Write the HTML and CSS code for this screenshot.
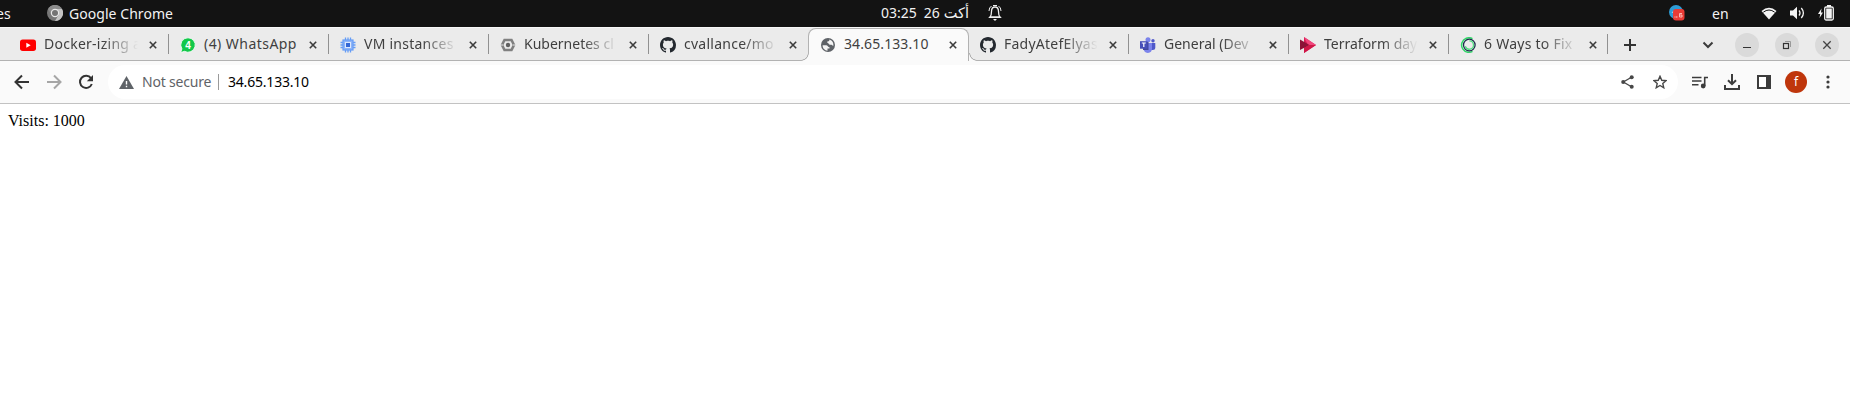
FILE: index.html
```html
<!DOCTYPE html>
<html lang="en">
<head>
<meta charset="utf-8">
<title>34.65.133.10</title>
<link rel="stylesheet" href="styles.css">
</head>
<body>
<svg width="0" height="0" class="defs">
  <symbol id="x" viewBox="0 0 8 8"><path d="M.8.8l6.4 6.4M7.2.8L.8 7.2" stroke="#3c3c3c" stroke-width="1.6"/></symbol>
  <symbol id="github" viewBox="0 0 16 16"><path fill="#24292f" d="M8 0C3.58 0 0 3.58 0 8c0 3.54 2.29 6.53 5.47 7.59.4.07.55-.17.55-.38 0-.19-.01-.82-.01-1.49-2.01.37-2.53-.49-2.69-.94-.09-.23-.48-.94-.82-1.13-.28-.15-.68-.52-.01-.53.63-.01 1.08.58 1.23.82.72 1.21 1.87.87 2.33.66.07-.52.28-.87.51-1.07-1.78-.2-3.64-.89-3.64-3.95 0-.87.31-1.59.82-2.15-.08-.2-.36-1.02.08-2.12 0 0 .67-.21 2.2.82.64-.18 1.32-.27 2-.27s1.36.09 2 .27c1.53-1.04 2.2-.82 2.2-.82.44 1.1.16 1.92.08 2.12.51.56.82 1.27.82 2.15 0 3.07-1.87 3.75-3.65 3.95.29.25.54.73.54 1.48 0 1.07-.01 1.93-.01 2.2 0 .21.15.46.55.38A8.01 8.01 0 0016 8c0-4.42-3.58-8-8-8z"/></symbol>
</svg>

<header class="system">
  <span class="activities">es</span>
  <svg class="chrome" width="16" height="16" viewBox="0 0 16 16"><circle cx="8" cy="8" r="8" fill="#777"/><path d="M8 4h7a8 8 0 01-7 12l3.500-6z" fill="#c4c4c4"/><path d="M1 4a8 8 0 0114 0H8L4.500 10z" fill="#8b8b8b"/><circle cx="8" cy="8" r="4.200" fill="#e8e8e8"/><circle cx="8" cy="8" r="3" fill="#747474"/></svg>
  <span class="appname">Google Chrome</span>
  <span class="clock"><span>03:25</span><span>26</span><span class="month" lang="ar">أكت</span></span>
  <svg class="bell" width="14" height="18" viewBox="0 0 14 18" fill="none" stroke="#eee"><path d="M2 13c1.500-1.500 1.500-3 1.500-5.500C3.500 4.500 5 3 7 3s3.500 1.500 3.500 4.500c0 2.500 0 4 1.500 5.500z" stroke-width="1.300"/><path d="M1 7q0-3.500 2.500-5M13 7q0-3.500-2.500-5M5 1.500h4M.8 13.500h12.400"/><path d="M5 15h4l-2 2z" fill="#eee" stroke="none"/></svg>
  <svg class="tray" width="16" height="16" viewBox="0 0 16 16"><circle cx="7" cy="7" r="7" fill="#2d9bd5"/><path d="M2.500 7.500l3-2v2z" fill="#fff"/><rect x="4" y="4" width="11.500" height="11.500" rx="3" fill="#e93b35"/><path d="M5.500 12h3.500" stroke="#ffc4bf" stroke-dasharray="1 .5"/><path d="M13 8.500h-2.500V12H13v-2h-2.500" fill="none" stroke="#ffc4bf" stroke-width=".9"/></svg>
  <span class="lang">en</span>
  <svg class="wifi" width="16" height="13" viewBox="0 0 16 13"><path d="M.5 4Q8-2.500 15.500 4L8 12.500z" fill="#f4f4f4"/><path d="M2.300 5.200Q8 .8 13.700 5.200" fill="none" stroke="#131313" stroke-width="1"/></svg>
  <svg class="sound" width="15" height="14" viewBox="0 0 15 14"><path d="M0 4.500h3L7 .8v12.400l-4-3.700H0z" fill="#f4f4f4"/><path d="M9 4.500q2 2.500 0 5M11.300 2q4.200 5 0 10" fill="none" stroke="#f4f4f4" stroke-width="1.300"/></svg>
  <svg class="battery" width="16" height="16" viewBox="0 0 16 16"><path d="M3.500 3.500L0 9h2.200L1.500 13 5 7.500H3z" fill="#f4f4f4"/><rect x="6.700" y="2" width="8.600" height="13" rx="1.500" fill="none" stroke="#f4f4f4" stroke-width="1.300"/><path d="M9 0h4v2H9zM8.200 3.500h5.600v10H8.200z" fill="#f4f4f4"/></svg>
</header>

<nav class="tabs">
  <div class="tab"><svg class="fav" viewBox="0 0 16 16"><rect y="2.500" width="16" height="11.500" rx="2.700" fill="#f00"/><path d="M6.300 5.700l4.400 2.500-4.400 2.500z" fill="#fff"/></svg><span class="title fade wide">Docker-izing a</span><svg class="close"><use href="#x"/></svg></div>
  <div class="tab"><svg class="fav" viewBox="0 0 16 16"><path d="M8 .8a7.200 7.200 0 11-3.500 13.500L.8 15.500l1.100-3.700A7.200 7.200 0 018 .8z" fill="#12c84a" stroke="#fff" stroke-width=".8"/><text x="5.300" y="11.700" class="badge4">4</text></svg><span class="title wider">(4) WhatsApp</span><svg class="close"><use href="#x"/></svg></div>
  <div class="tab"><svg class="fav" viewBox="0 0 16 16"><path d="M5.500.5v15M8 .5v15M10.500.5v15M.5 5.500h15M.5 8h15M.5 10.500h15" stroke="#669df6" stroke-width="1.300"/><rect x="3" y="3" width="10" height="10" fill="#8fb4f7" stroke="#669df6" stroke-width="1.200"/><rect x="5" y="5" width="6" height="6" fill="#dce8fc"/><rect x="6" y="6" width="4" height="4" fill="#3367d6"/></svg><span class="title fade wide">VM instances</span><svg class="close"><use href="#x"/></svg></div>
  <div class="tab"><svg class="fav" viewBox="0 0 16 16"><path d="M4.500 3h7L14 8l-2.500 5h-7L2 8z" fill="none" stroke="#808080" stroke-width="2.600"/><path d="M0 8h3M13 8h3" stroke="#ebebeb" stroke-width="1"/><circle cx="8" cy="8" r="2.200" fill="#606060"/></svg><span class="title fade">Kubernetes cl</span><svg class="close"><use href="#x"/></svg></div>
  <div class="tab before"><svg class="fav"><use href="#github"/></svg><span class="title fade wide">cvallance/mo</span><svg class="close"><use href="#x"/></svg></div>
  <div class="tab active"><svg class="fav" viewBox="0 0 16 16"><circle cx="8" cy="8" r="7" fill="#5f6368"/><path d="M2.600 8.200h3.500c1.700 0 1.800 2 3.400 2v1.300H7.500v2.200C4.600 13.300 2.500 11.200 2.600 8.200zM9.300 2.600c3 .8 4.500 3.500 4 6.400-1.200-.8-1.200-1.500-3.200-1.300-1.400 0-1.400-2-3-2.200 0-1 .5-1.300 1.600-1.300.7 0 .6-.8.6-1.600z" fill="#f5f5f5"/></svg><span class="title ip">34.65.133.10</span><svg class="close"><use href="#x"/></svg></div>
  <div class="tab after"><svg class="fav"><use href="#github"/></svg><span class="title fade wide">FadyAtefElyas</span><svg class="close"><use href="#x"/></svg></div>
  <div class="tab"><svg class="fav" viewBox="0 0 16 16"><circle cx="8" cy="2.800" r="2.500" fill="#7b83eb"/><circle cx="13" cy="3.700" r="1.700" fill="#5059c9"/><path d="M10 6h5.300v4.500q0 2.500-2.600 2.500H10z" fill="#5059c9"/><path d="M3.500 6H12v5.500q0 4-4.200 4.500-4.300-.5-4.300-5z" fill="#7b83eb"/><rect x="3" y="5" width="5.500" height="8" fill="#414699"/><rect y="4.200" width="7.500" height="7.500" fill="#464eb8"/><path d="M1.800 6h4M3.800 6v4" stroke="#fff" stroke-width="1.200"/></svg><span class="title fade">General (Dev</span><svg class="close"><use href="#x"/></svg></div>
  <div class="tab"><svg class="fav" viewBox="0 0 16 16"><path d="M4 0l12 8-12 8z" fill="#d81b55"/><path d="M4 0l12 8H8z" fill="#f0477d"/><path d="M0 2.500L9.500 8 0 13z" fill="#8c1237"/><path d="M4 11l5-3 7 0-12 8z" fill="#cf1747"/></svg><span class="title fade">Terraform day</span><svg class="close"><use href="#x"/></svg></div>
  <div class="tab last"><svg class="fav" viewBox="0 0 16 16"><path d="M12.500 1.700A7.300 7.300 0 108 15.300q2.500 0 4.500-1" fill="none" stroke="#2fd566" stroke-width="1.500"/><circle cx="9.300" cy="8" r="5.800" fill="none" stroke="#1d2b4c" stroke-width="1.300"/><path d="M9.300 3.800a4.200 4.200 0 11-4 5.500" fill="none" stroke="#55dc83" stroke-width="1.300"/></svg><span class="title fade wide">6 Ways to Fix</span><svg class="close"><use href="#x"/></svg></div>
  <svg class="plus" width="12" height="12" viewBox="0 0 12 12"><path d="M6 0v12M0 6h12" stroke="#333" stroke-width="2"/></svg>
  <svg class="chevron" width="12" height="8" viewBox="0 0 12 8"><path d="M1.500 1.500L6 6l4.500-4.500" fill="none" stroke="#3c3c3c" stroke-width="2"/></svg>
  <div class="controls">
    <span class="ctl"><svg viewBox="0 0 24 24"><path d="M8 14.500h8" stroke="#333"/></svg></span>
    <span class="ctl"><svg viewBox="0 0 24 24" fill="none"><path d="M10 8.500h5.500V14" stroke="#999"/><rect x="8.500" y="10.500" width="5" height="5" stroke="#333" stroke-width="1.200"/></svg></span>
    <span class="ctl"><svg viewBox="0 0 24 24"><path d="M8.300 8.300l7.400 7.400M15.700 8.300l-7.400 7.400" stroke="#444" stroke-width="1.300"/></svg></span>
  </div>
</nav>

<section class="toolbar">
  <div class="navs">
    <svg width="16" height="16" viewBox="0 0 16 16" fill="none" stroke="#333" stroke-width="2"><path d="M15 8H2.500M8 1.500L1.500 8 8 14.500"/></svg>
    <svg width="16" height="16" viewBox="0 0 16 16" fill="none" stroke="#a6a6a6" stroke-width="2"><path d="M1 8h12.500M8 1.500L14.500 8 8 14.500"/></svg>
    <svg width="16" height="16" viewBox="0 0 16 16" fill="none"><path d="M13 4.200A6.100 6.100 0 1013.800 10" stroke="#333" stroke-width="2"/><path d="M15 1v6.200H8.800z" fill="#333"/></svg>
  </div>
  <div class="omnibox">
    <svg width="15" height="13" viewBox="0 0 15 13"><path d="M7.500 0L15 13H0z" fill="#5f6368"/><path d="M7.500 5v3.500M7.500 9.800v1.500" stroke="#fff" stroke-width="1.400"/></svg>
    <span class="secure">Not secure</span>
    <span class="url">34.65.133.10</span>
    <svg class="share" width="13" height="14" viewBox="0 0 13 14"><path d="M10.500 2.200L2.300 7l8.200 4.800" fill="none" stroke="#474747" stroke-width="1.300"/><g fill="#474747"><circle cx="10.700" cy="2.300" r="2"/><circle cx="2.200" cy="7" r="2"/><circle cx="10.700" cy="11.700" r="2"/></g></svg>
    <svg class="star" width="14" height="14" viewBox="0 0 14 14"><path d="M7 1.300l1.750 4 4.250.4-3.200 2.850.95 4.200L7 10.500l-3.750 2.250.95-4.200L1 5.700l4.250-.4z" fill="none" stroke="#474747" stroke-width="1.400"/></svg>
  </div>
  <svg class="music" width="16" height="13" viewBox="0 0 16 13"><path d="M0 1.500h9.500M0 5h9.500M0 8.700h6.500M12.700 10V1.500H16" fill="none" stroke="#3c3c3c" stroke-width="1.600"/><circle cx="11.200" cy="10" r="2.400" fill="#3c3c3c"/></svg>
  <svg class="download" width="16" height="16" viewBox="0 0 16 16" fill="none" stroke="#3c3c3c" stroke-width="2"><path d="M8 0v10M4 6.200l4 4 4-4M1 11v4h14v-4"/></svg>
  <svg class="panel" width="14" height="14" viewBox="0 0 14 14"><rect x="1" y="1" width="12" height="12" fill="#fff" stroke="#3c3c3c" stroke-width="2"/><path d="M9 1h4v12H9z" fill="#3c3c3c"/></svg>
  <span class="avatar">f</span>
  <svg class="dots" width="4" height="14" viewBox="0 0 4 14" fill="#3c3c3c"><circle cx="2" cy="2" r="1.600"/><circle cx="2" cy="7" r="1.600"/><circle cx="2" cy="12" r="1.600"/></svg>
</section>

<main class="page">Visits: 1000</main>
</body>
</html>
```
FILE: styles.css
```css
* { box-sizing: border-box; }
body { margin: 0; background: #fff; font-family: "Noto Sans", "Open Sans", sans-serif; font-size: 14px; overflow: hidden; }
svg { display: block; flex: none; }
.defs { position: absolute; }
span { white-space: nowrap; flex: none; }

.system { height: 27px; display: flex; align-items: center; background: #131313; color: #f2f2f2; line-height: 26px; padding-bottom: 1px; }
.system > span { padding-top: 1px; }
.activities { width: 47px; margin-left: -4px; }
.chrome { margin-left: 4px; }
.appname { width: 812px; margin-left: 6px; letter-spacing: .05px; }
.clock { display: flex; width: 88px; margin-top: -2px; }
.clock span + span { margin-left: 7px; }
.clock .month { font-family: "DejaVu Sans", sans-serif; font-size: 14.500px; margin-left: 4px; }
.bell { margin-left: 19px; }
.tray { margin-left: 667px; }
.lang { width: 17px; margin-left: 27px; }
.wifi { margin-left: 32px; }
.sound { margin-left: 13px; }
.battery { margin-left: 13px; }

.tabs { height: 34px; display: flex; align-items: center; padding-left: 9px; background: #ebebeb; border-top: 1px solid #f7f7f7; box-shadow: inset 0 -1px #b2b2b2; color: #3f3f3f; }
.tab { width: 160px; height: 33px; display: flex; align-items: center; padding-left: 11px; background: linear-gradient(#919191, #919191) right 0 top 6px / 1px 20px no-repeat; }
.last { width: 159px; }
.before, .after { position: relative; }
.before { background: none; }
.before::after, .after::before { content: ""; position: absolute; bottom: 0; width: 8px; height: 8px; }
.before::after { right: 0; background: radial-gradient(circle at 0 0, #ebebeb 6.500px, #b2b2b2 7px, #b2b2b2 7.500px, #fafafa 8px); }
.after::before { left: 0; background: radial-gradient(circle at 100% 0, #ebebeb 6.500px, #b2b2b2 7px, #b2b2b2 7.500px, #fafafa 8px); }
.active { width: 161px; margin-left: -1px; background: #fafafa; border: 1px solid #b2b2b2; border-bottom: 0; border-radius: 8px 8px 0 0; }
.fav { width: 16px; height: 16px; }
.badge4 { font: bold 10px "Liberation Sans", sans-serif; fill: #fff; }
.title { width: 94px; margin-left: 8px; padding-bottom: 2px; line-height: 24px; }
.wide { letter-spacing: .25px; }
.wider { letter-spacing: .45px; }
.ip { letter-spacing: .1px; }
.fade { -webkit-mask-image: linear-gradient(90deg, #000 62%, transparent 100%); mask-image: linear-gradient(90deg, #000 62%, transparent 100%); }
.close { width: 8px; height: 8px; margin-left: 11px; }
.plus { margin-left: 16px; }
.chevron { margin-left: 66px; }
.controls { display: flex; gap: 16px; margin-left: 21px; }
.ctl { width: 24px; height: 24px; border-radius: 50%; background: #dadada; }

.toolbar { height: 43px; display: flex; align-items: center; background: #fafafa; border-bottom: 1px solid #c2c2c2; }
.navs { display: flex; gap: 16px; margin-left: 14px; }
.omnibox { width: 1570px; height: 34px; margin-left: 14px; padding-left: 11px; display: flex; align-items: center; border-radius: 17px; background: #fff; line-height: 20px; }
.secure { width: 77px; height: 16px; line-height: 15px; margin-left: 8px; border-right: 1px solid #9a9a9a; color: #5f6368; letter-spacing: -.2px; }
.url { width: 81px; margin-left: 9px; color: #000; letter-spacing: -.2px; }
.share { margin-left: 1312px; }
.star { margin-left: 19px; }
.music { margin-left: 14px; }
.download { margin-left: 16px; }
.panel { margin-left: 17px; }
.avatar { width: 22px; height: 22px; margin-left: 14px; border-radius: 50%; background: #bf360c; color: #fff; font-size: 12px; line-height: 21px; text-align: center; }
.dots { margin-left: 19px; }
.page { padding: 8px; font: 16px "Liberation Serif", serif; }
```
